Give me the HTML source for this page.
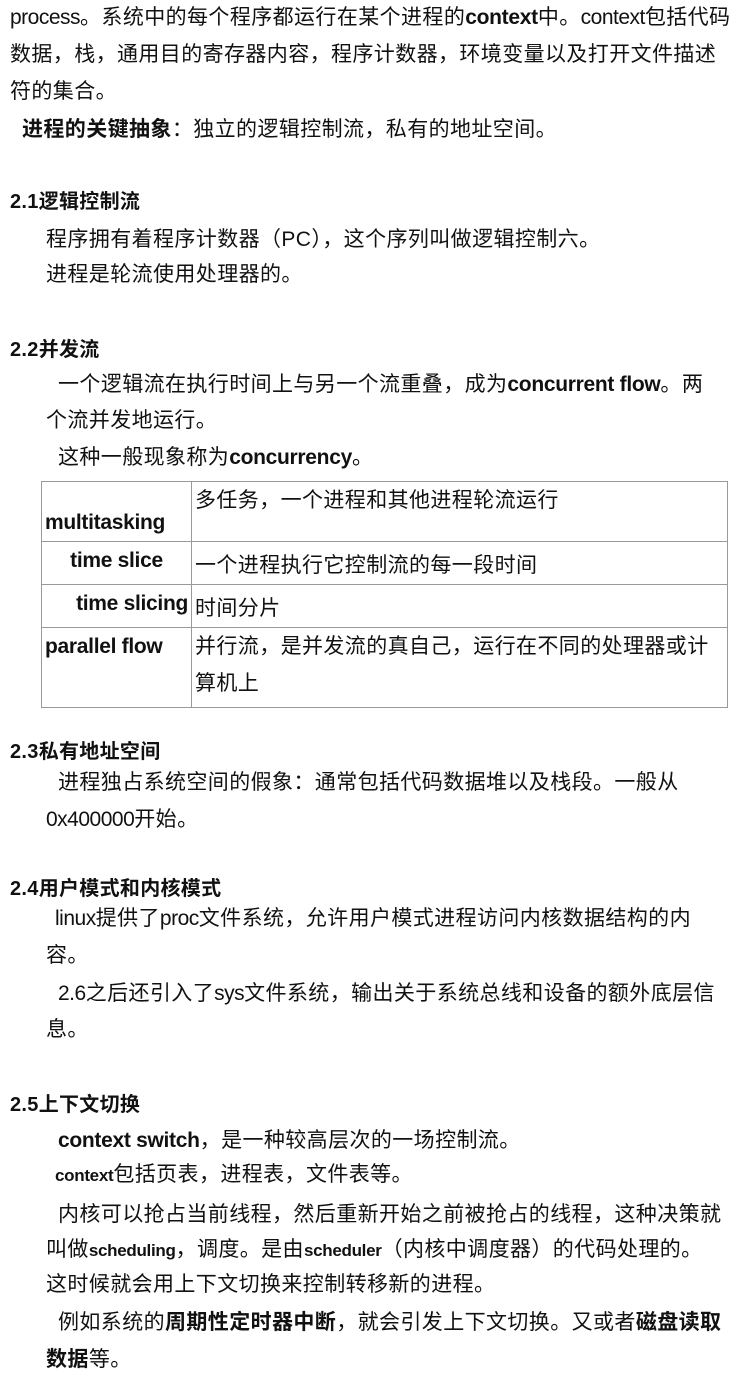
<!DOCTYPE html>
<html><head><meta charset="utf-8"><style>
body{margin:0;width:736px;height:1379px;background:#fff;position:relative;overflow:hidden;font-family:"Liberation Sans","Noto Sans CJK SC",sans-serif;color:#111;font-size:21px}
.l{position:absolute;white-space:nowrap;line-height:28px;letter-spacing:0.4px}
.e{letter-spacing:-0.5px}
.h{font-weight:bold;font-size:20px;letter-spacing:0.3px}
b{font-weight:bold;letter-spacing:-0.3px}
table{position:absolute;left:41px;top:481px;width:687px;border-collapse:collapse}
td{border:1px solid #999;padding:0 3px;vertical-align:top;line-height:37px;font-size:21px;letter-spacing:0.4px}
td.k{font-weight:bold;width:143px;text-align:center;letter-spacing:-0.3px}
</style></head><body>
<div class="l" style="left:10px;top:4px"><span class="e">process</span>。系统中的每个程序都运行在某个进程的<b>context</b>中。<span class="e">context</span>包括代码</div>
<div class="l" style="left:10px;top:41px">数据，栈，通用目的寄存器内容，程序计数器，环境变量以及打开文件描述</div>
<div class="l" style="left:10px;top:78px">符的集合。</div>
<div class="l" style="left:22px;top:116px"><b style="letter-spacing:0.4px">进程的关键抽象</b>：独立的逻辑控制流，私有的地址空间。</div>
<div class="l h" style="left:10px;top:188px">2.1逻辑控制流</div>
<div class="l" style="left:46px;top:226px">程序拥有着程序计数器（PC），这个序列叫做逻辑控制六。</div>
<div class="l" style="left:46px;top:261px">进程是轮流使用处理器的。</div>
<div class="l h" style="left:10px;top:336px">2.2并发流</div>
<div class="l" style="left:58px;top:371px">一个逻辑流在执行时间上与另一个流重叠，成为<b>concurrent flow</b>。两</div>
<div class="l" style="left:46px;top:407px">个流并发地运行。</div>
<div class="l" style="left:58px;top:444px">这种一般现象称为<b>concurrency</b>。</div>
<table>
<tr style="height:60px"><td class="k" style="vertical-align:bottom;text-align:left">multitasking</td><td>多任务，一个进程和其他进程轮流运行</td></tr>
<tr style="height:43px"><td class="k">time slice</td><td style="vertical-align:bottom">一个进程执行它控制流的每一段时间</td></tr>
<tr style="height:43px"><td class="k" style="text-align:right">time slicing</td><td style="vertical-align:bottom">时间分片</td></tr>
<tr style="height:80px"><td class="k" style="text-align:left">parallel flow</td><td>并行流，是并发流的真自己，运行在不同的处理器或计<br>算机上</td></tr>
</table>
<div class="l h" style="left:10px;top:738px">2.3私有地址空间</div>
<div class="l" style="left:58px;top:769px">进程独占系统空间的假象：通常包括代码数据堆以及栈段。一般从</div>
<div class="l" style="left:46px;top:806px"><span class="e">0x400000</span>开始。</div>
<div class="l h" style="left:10px;top:875px">2.4用户模式和内核模式</div>
<div class="l" style="left:55px;top:905px"><span class="e">linux</span>提供了<span class="e">proc</span>文件系统，允许用户模式进程访问内核数据结构的内</div>
<div class="l" style="left:46px;top:942px">容。</div>
<div class="l" style="left:58px;top:980px"><span class="e">2.6</span>之后还引入了<span class="e">sys</span>文件系统，输出关于系统总线和设备的额外底层信</div>
<div class="l" style="left:46px;top:1016px">息。</div>
<div class="l h" style="left:10px;top:1091px">2.5上下文切换</div>
<div class="l" style="left:58px;top:1127px"><b>context switch</b>，是一种较高层次的一场控制流。</div>
<div class="l" style="left:55px;top:1161px"><b style="font-size:17px">context</b>包括页表，进程表，文件表等。</div>
<div class="l" style="left:58px;top:1201px">内核可以抢占当前线程，然后重新开始之前被抢占的线程，这种决策就</div>
<div class="l" style="left:46px;top:1236px">叫做<b style="font-size:17px">scheduling</b>，调度。是由<b style="font-size:17px">scheduler</b>（内核中调度器）的代码处理的。</div>
<div class="l" style="left:46px;top:1271px">这时候就会用上下文切换来控制转移新的进程。</div>
<div class="l" style="left:58px;top:1309px">例如系统的<b style="letter-spacing:0.4px">周期性定时器中断</b>，就会引发上下文切换。又或者<b style="letter-spacing:0.4px">磁盘读取</b></div>
<div class="l" style="left:46px;top:1346px"><b style="letter-spacing:0.4px">数据</b>等。</div>
</body></html>
